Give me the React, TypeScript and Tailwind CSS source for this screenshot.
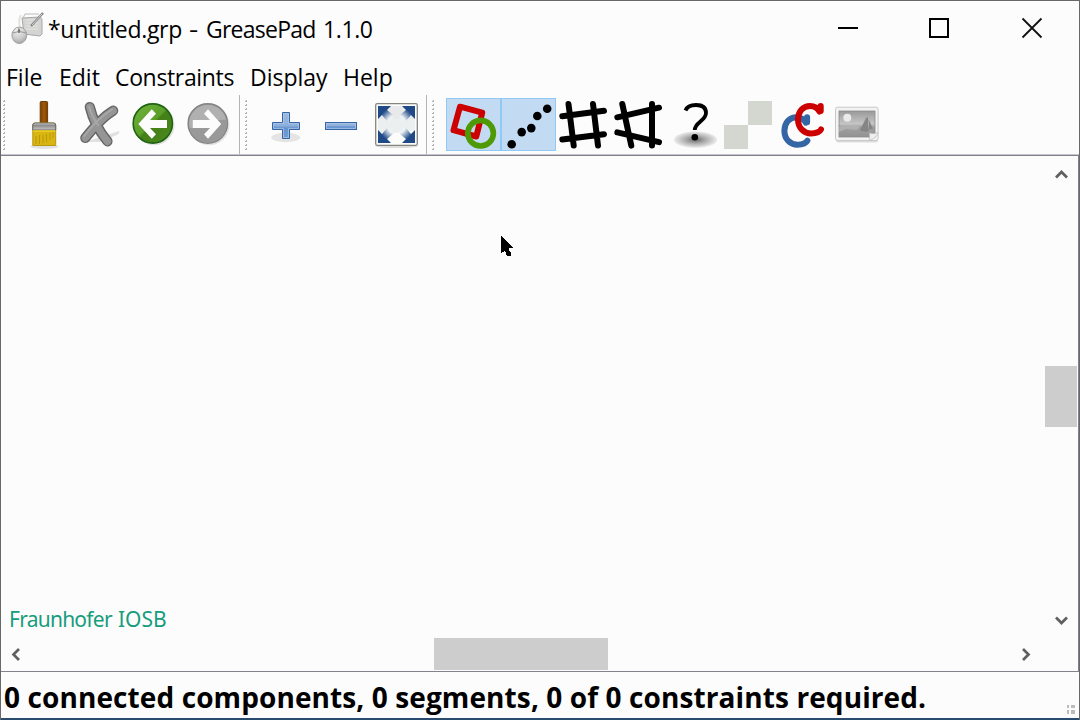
import type { ReactNode } from "react";

const menus = [
  { label: "File", box: "ml-[5px] w-[53px]" },
  { label: "Edit", box: "w-[56px]" },
  { label: "Constraints", box: "w-[135px] tracking-[-0.35px]" },
  { label: "Display", box: "w-[93px]" },
  { label: "Help", box: "w-[60px]" },
];

function Tool({ x, label, active = false, children }: { x: number; label: string; active?: boolean; children: ReactNode }) {
  return (
    <button
      aria-label={label}
      className={`h-[53px] w-[55px] shrink-0 ${active ? "bg-[#c2dbf2] outline outline-1 -outline-offset-1 outline-[#90c8f6]" : ""}`}
    >
      <svg className="block" width="55" height="53" viewBox={`${x} 98 55 53`}>
        {children}
      </svg>
    </button>
  );
}

function Handle() {
  return (
    <svg className="mt-[2px] shrink-0" width="2" height="51" viewBox="0 0 2 51">
      {Array.from({ length: 13 }, (_, i) => (
        <path key={i} d={`M0 ${i * 4 + 1}h1v-1h1v2h-2z`} fill="#b0b0b0" />
      ))}
    </svg>
  );
}

function Separator() {
  return <div className="-mt-[3px] h-[59px] w-px shrink-0 bg-[#b4b4b4]" />;
}

function Chevron({ d }: { d: string }) {
  return (
    <svg width="13" height="13" viewBox="0 0 13 13" fill="none" stroke="#606060" strokeWidth="2.7">
      <path d={d} />
    </svg>
  );
}

function AppIcon() {
  return (
    <svg className="ml-[10px] mt-[10px] shrink-0" width="34" height="36" viewBox="11 11 34 36">
      <defs>
        <radialGradient id="mouse" cx="0.4" cy="0.2" r="0.9">
          <stop offset="0" stopColor="#f2f2f2" />
          <stop offset="0.6" stopColor="#c8c8c8" />
          <stop offset="1" stopColor="#999" />
        </radialGradient>
      </defs>
      <path d="M22 18L40 17Q42 18 42 20V34L40 36L24 34Z" fill="#d4d4d4" stroke="#a7a7a7" />
      <path d="M26 20H37M26 23H38M26 26H38M26 29H38" stroke="#dcdcd8" strokeWidth="2" />
      <path d="M23 18L25 14H39" stroke="#bbb" fill="none" />
      <path d="M31 26L43 13" stroke="#858585" strokeWidth="2.4" />
      <path d="M32 25L42 14" stroke="#d9d9d9" strokeWidth="0.9" />
      <path d="M19 30C22 23 16 23 21 15" stroke="#e3e3df" strokeWidth="2" fill="none" />
      <ellipse cx="19.3" cy="35.3" rx="7.4" ry="8.2" fill="url(#mouse)" stroke="#a0a0a0" />
      <path d="M12.5 33Q19 30 26.5 33M19 28V33" stroke="#999" fill="none" />
      <ellipse cx="19" cy="31" rx="1.3" ry="2" fill="#777" />
    </svg>
  );
}

const letterC = "M820.7 106V111M819.5 111.5C817 107 813 106 810 106C803 106 798 111.5 798 119.5C798 128 804 133.5 811 133.5C816 133.5 820 131.5 821 129.5";

export default function App() {
  return (
    <div className="flex h-[720px] w-[1080px] flex-col overflow-hidden border-x border-t border-[#686868] bg-[#fcfcfc] font-['Open_Sans','Noto_Sans',sans-serif] text-black">
      <header className="flex h-[59px] shrink-0">
        <AppIcon />
        <h1 className="ml-[3px] flex w-[330px] whitespace-nowrap pt-[9px] text-[23px] leading-[38px]">
          <span className="w-[141px] tracking-[-0.3px]">*untitled.grp</span>
          <span className="w-[17px] origin-left scale-x-125">-</span>
          <span className="w-[117px] tracking-[-0.75px]">GreasePad</span>
          <span className="tracking-[-0.4px]">1.1.0</span>
        </h1>
        <div className="ml-auto flex">
          <button aria-label="Minimize" className="h-[56px] w-[91px]">
            <svg width="91" height="56" viewBox="803 1 91 56"><path d="M838 28H858" stroke="#000" strokeWidth="2" /></svg>
          </button>
          <button aria-label="Maximize" className="h-[56px] w-[91px]">
            <svg width="91" height="56" viewBox="894 1 91 56"><path d="M930 19H948V37H930Z" stroke="#000" strokeWidth="2" fill="none" /></svg>
          </button>
          <button aria-label="Close" className="h-[56px] w-[94px]">
            <svg width="94" height="56" viewBox="985 1 94 56"><path d="M1022.5 18.5L1041.5 37.5M1041.5 18.5L1022.5 37.5" stroke="#111" strokeWidth="1.8" /></svg>
          </button>
        </div>
      </header>

      <nav className="flex h-[38px] shrink-0 text-[23px] leading-[34px]">
        {menus.map((m) => (
          <div key={m.label} className={`${m.box} shrink-0 whitespace-nowrap`}>{m.label}</div>
        ))}
      </nav>

      <div className="flex h-[57px] shrink-0 border-b border-[#c4c4cc]">
        <div className="flex pl-[2px]">
          <Handle />
          <div className="w-[11px]" />
          <Tool x={16} label="Clear">
            <defs>
              <linearGradient id="wood"><stop offset="0" stopColor="#7b3f00" /><stop offset="0.5" stopColor="#a05a08" /><stop offset="1" stopColor="#7b3f00" /></linearGradient>
              <linearGradient id="steel" x2="0" y2="1"><stop offset="0" stopColor="#eee" /><stop offset="0.3" stopColor="#888" /><stop offset="1" stopColor="#c8c8c8" /></linearGradient>
            </defs>
            <ellipse cx="44.5" cy="146.5" rx="14" ry="2.6" fill="#e2e2e2" />
            <rect x="40.2" y="101.5" width="7.4" height="22" rx="1" fill="url(#wood)" stroke="#6a3a08" />
            <path d="M32.8 145.5V125Q32.8 123 35 123H53.5Q55.7 123 55.7 125V145.5Z" fill="#d9b512" stroke="#b8980c" />
            <path d="M32.8 130V125Q32.8 123 35 123H53.5Q55.7 123 55.7 125V130Z" fill="url(#steel)" stroke="#666" />
            <path d="M36 136V144M39.5 135V144M43 135V143M46.5 134V142M50 133V140M53 132V138" stroke="#b39200" strokeWidth="0.8" />
            <path d="M33.3 131H55.2" stroke="#efd020" strokeWidth="1.5" />
          </Tool>
          <Tool x={71} label="Delete">
            <path d="M85 142L104 136L119 131Q121 134 114 136L104 142Z" fill="#e0e0e0" />
            <g fill="none" strokeLinecap="round">
              <path d="M89.8 107Q94 125 107.5 141.3M113.2 110.7Q102 117 85.3 138" stroke="#666" strokeWidth="10.2" />
              <path d="M89.8 107Q94 125 107.5 141.3M113.2 110.7Q102 117 85.3 138" stroke="#959595" strokeWidth="7.4" />
              <path d="M89.2 107Q92 117 98 125M112 109.5Q99 117 84 136" stroke="#a8a8a8" strokeWidth="2" />
            </g>
          </Tool>
          <Tool x={126} label="Undo">
            <defs><linearGradient id="green" x2="1" y2="1"><stop offset="0" stopColor="#73b23c" /><stop offset="0.48" stopColor="#5a9f2a" /><stop offset="0.52" stopColor="#447f18" /><stop offset="1" stopColor="#4b8a1e" /></linearGradient></defs>
            <circle cx="154.3" cy="125" r="20.3" fill="#e2e2e2" />
            <circle cx="152.8" cy="123.5" r="19.6" fill="url(#green)" stroke="#1e6412" strokeWidth="1.6" />
            <path d="M138.3 124L151.8 109.3L156 113.7L150 120H167V128H150L156 134.3L151.8 138.8Z" fill="#fcfcfc" />
          </Tool>
          <Tool x={181} label="Redo">
            <circle cx="209.2" cy="125" r="20.3" fill="#e4e4e4" />
            <circle cx="207.8" cy="123.5" r="19.6" fill="#b0b0b0" stroke="#858585" strokeWidth="1.6" />
            <path d="M189.5 128C200 129 216 118 226.2 120A18.7 18.7 0 0 1 189.5 128" fill="#999" />
            <path d="M221.2 124L208 109.3L204 113.7L210 120H192.8V128H210L204 134.3L208 138.8Z" fill="#fcfcfc" />
          </Tool>
          <div className="w-[3px]" />
          <Separator />
        </div>

        <div className="flex pl-[5px]">
          <Handle />
          <div className="w-[12px]" />
          <Tool x={259} label="Zoom in">
            <defs><linearGradient id="blue" x2="0" y2="1"><stop offset="0" stopColor="#9db9dd" /><stop offset="0.5" stopColor="#8fb0dc" /><stop offset="0.6" stopColor="#6492cf" /><stop offset="1" stopColor="#729fcf" /></linearGradient></defs>
            <ellipse cx="285.7" cy="137.5" rx="14.5" ry="4.7" fill="#e4e4e4" />
            <path d="M282.5 112.5H289.5V122.5H299.5V129.5H289.5V138.5H282.5V129.5H272.5V122.5H282.5Z" fill="url(#blue)" stroke="#3465a4" />
            <path d="M283.5 128.5V137.5H288.5V128.5H298.5V123.5H288.5V113.5H283.5V123.5H273.5V128.5Z" fill="none" stroke="#adc7e8" strokeWidth="0.7" />
          </Tool>
          <Tool x={314} label="Zoom out">
            <rect x="325.5" y="122.5" width="31" height="7" fill="url(#blue)" stroke="#3465a4" />
            <rect x="326.5" y="123.5" width="29" height="5" fill="none" stroke="#adc7e8" strokeWidth="0.7" />
          </Tool>
          <Tool x={369} label="Fit in view">
            <defs>
              <radialGradient id="fade" gradientUnits="userSpaceOnUse" cx="396.5" cy="124.5" r="27"><stop offset="0.35" stopColor="#eef2f5" /><stop offset="0.67" stopColor="#204a87" /></radialGradient>
            </defs>
            <ellipse cx="396.5" cy="146" rx="21.5" ry="2" fill="#ddd" />
            <rect x="375.7" y="103.7" width="41.6" height="41.6" rx="1.5" fill="#fcfcfc" stroke="#85857f" strokeWidth="1.3" />
            <path d="M378 106H415V124H378Z" fill="#e7e9ea" />
            <path d="M378 119Q396 118 415 119V130Q396 135 378 132Z" fill="#ebeff0" />
            <g fill="url(#fade)">
              {[0, 90, 180, 270].map((angle) => (
                <path key={angle} transform={`rotate(${angle} 396.5 124.5)`} d="M378 106H391L387 110L393 115V118L390 121H387L382 115L378 119Z" />
              ))}
            </g>
          </Tool>
          <div className="w-[2px]" />
          <Separator />
        </div>

        <div className="flex pl-[5px]">
          <Handle />
          <div className="w-[12px]" />
          <Tool x={446} label="Show constraints" active>
            <path d="M460 106.7L482.2 112.7L476.3 136.5L453.5 130.2Z" fill="none" stroke="#cc0000" strokeWidth="6" strokeLinejoin="round" />
            <circle cx="480.6" cy="133.2" r="12.8" fill="none" stroke="#4e9a06" strokeWidth="5.6" />
          </Tool>
          <Tool x={501} label="Show points" active>
            {[[511.7, 144.3], [521.7, 132.1], [531.3, 128.1], [537.3, 116], [547.2, 108.8]].map(([cx, cy]) => (
              <circle key={cx} cx={cx} cy={cy} r="4.3" fill="#000" />
            ))}
          </Tool>
          <Tool x={556} label="Orthogonal">
            <path d="M568.5 104L573.7 145.6M593 104L598 145.6M562.3 116.3L604 110.8M562.3 139.6L604 134.2" stroke="#000" strokeWidth="6" strokeLinecap="round" />
          </Tool>
          <Tool x={611} label="Skewed">
            <path d="M622.3 104L631.3 145.6M652 104V145.6M617.3 117.3L659 107.7M617.3 132.4L659 142.2" stroke="#000" strokeWidth="6" strokeLinecap="round" />
          </Tool>
          <Tool x={666} label="Help">
            <defs><radialGradient id="shadow"><stop offset="0" stopColor="#686868" /><stop offset="0.45" stopColor="#aaa" /><stop offset="1" stopColor="#ededed" /></radialGradient></defs>
            <ellipse cx="695.5" cy="139.7" rx="21.7" ry="8.2" fill="url(#shadow)" />
            <path d="M685.5 110.5C687 106.5 691 105 696 105C702.5 105 706 108 706 113C706 121 694.8 122 694.8 130" stroke="#000" strokeWidth="3.8" fill="none" />
            <circle cx="694.8" cy="137.3" r="3.3" />
          </Tool>
          <Tool x={721} label="Background">
            <path d="M748 101H772V125H748ZM724 125H748V149H724Z" fill="#d3d7cf" shapeRendering="crispEdges" />
          </Tool>
          <Tool x={776} label="Connected components">
            <g fill="none" strokeWidth="6" strokeLinecap="round" strokeLinejoin="round">
              <path d={letterC} transform="translate(-13.6 11.2)" stroke="#3465a4" />
              <path d={letterC} stroke="#cc0000" />
            </g>
          </Tool>
          <Tool x={831} label="Show image">
            <defs><linearGradient id="photo" x2="0" y2="1"><stop offset="0" stopColor="#999" /><stop offset="0.5" stopColor="#c6c6c6" /><stop offset="0.6" stopColor="#a1a1a1" /><stop offset="1" stopColor="#929292" /></linearGradient></defs>
            <rect x="836" y="108.5" width="42" height="34" rx="2" fill="#dcdcdc" />
            <rect x="835.5" y="107.2" width="42.6" height="33.3" rx="2" fill="#f3f3f3" stroke="#c8c8c8" />
            <rect x="839" y="111" width="36" height="26" fill="url(#photo)" stroke="#8b8b8b" strokeWidth="0.8" />
            <circle cx="847.3" cy="117.7" r="4" fill="#eaeaea" />
            <path d="M860 130L866 118L868 117V129L871 128L867 132L861 131ZM868.5 119L873 129H869Z" fill="#858585" />
            <path d="M839 127L849 125L860 126L857 130L846 129L839 132Z" fill="#b7b7b7" opacity=".7" />
            <path d="M869 140.5Q870 137 869.5 133Q874 134.5 878 132.5Q877 138 869 140.5Z" fill="#eee" stroke="#bdbdbd" strokeWidth="0.7" />
          </Tool>
        </div>
      </div>

      <main className="grid min-h-0 flex-1 grid-cols-[1043px_34px] grid-rows-[481px_33px] border-b border-r border-t border-b-[#82828a] border-r-[#82828c] border-t-[#82828a]">
        <section className="relative flex items-end">
          <p className="ml-[8px] mb-[3px] flex whitespace-nowrap font-['Noto_Sans',sans-serif] text-[21px] leading-[30px] text-[#179c7d]">
            <span className="w-[109px] tracking-[-0.75px]">Fraunhofer</span>
            <span>IOSB</span>
          </p>
          <svg className="absolute left-[499px] top-[79px]" width="14" height="24" viewBox="0 0 14 24">
            <path d="M1 1L13 13H9V15L11 18V21H7L5 16L1 18Z" fill="#000" shapeRendering="crispEdges" />
          </svg>
        </section>
        <aside className="flex flex-col items-center">
          <div className="mt-[12px] h-[13px]"><Chevron d="M1 9.5L6.5 4L12 9.5" /></div>
          <div className="mr-px mt-[185px] h-[61px] w-[32px] shrink-0 self-end bg-[#cdcdcd]" />
          <div className="mb-[10px] mt-auto h-[13px]"><Chevron d="M1 3.5L6.5 9L12 3.5" /></div>
        </aside>
        <div className="flex items-center">
          <div className="ml-[8px] mt-[2px] h-[13px]"><Chevron d="M10 1L4.5 6.5L10 12" /></div>
          <div className="ml-[412px] h-[32px] w-[174px] bg-[#cdcdcd]" />
          <div className="ml-[412px] mt-[2px] h-[13px]"><Chevron d="M3 1L8.5 6.5L3 12" /></div>
        </div>
      </main>

      <footer className="flex h-[48px] shrink-0 justify-between border-b-2 border-[#294b6e]">
        <p className="ml-[3px] whitespace-nowrap text-[28px] font-bold leading-[50px] tracking-[0.1px]">0 connected components, 0 segments, 0 of 0 constraints required.</p>
        <svg className="mr-[4px] mt-[33px]" width="9" height="9" viewBox="0 0 9 9"><path d="M1 0h2v3H1zM5 0h4v3H5zM1 5h2v4H1zM5 5h4v4H5z" fill="#bcbcbc" /></svg>
      </footer>
    </div>
  );
}
